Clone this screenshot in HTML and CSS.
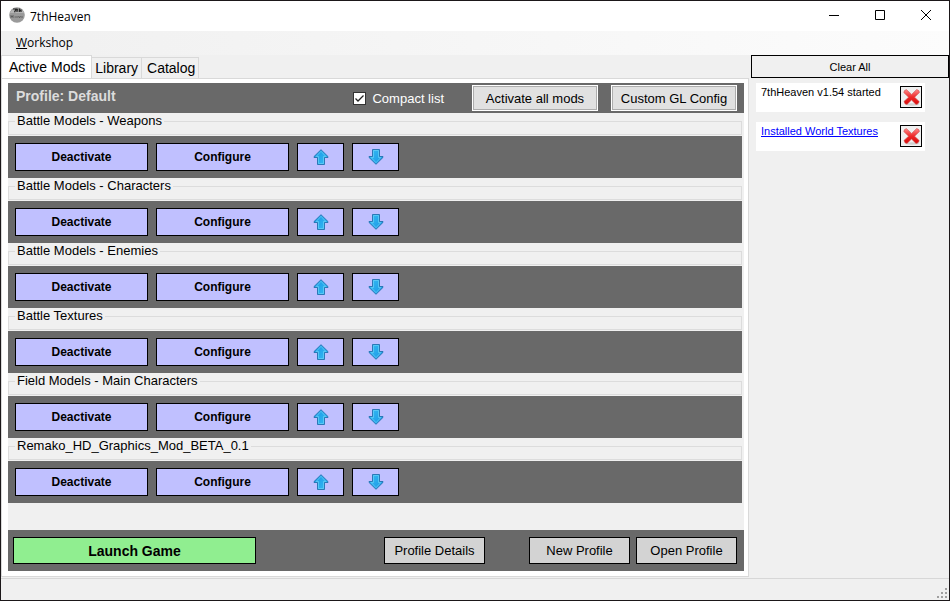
FILE: index.html
```html
<!DOCTYPE html>
<html lang="en">

<head>
    <meta charset="UTF-8">
    <meta name="viewport" content="width=device-width, initial-scale=1.0">
    <title>7thHeaven</title>
    <link rel="stylesheet" href="styles.css">
</head>

<body>

<!-- shared icons -->
<svg class="defs" width="0" height="0" aria-hidden="true">
    <defs>
        <linearGradient id="blue" x1="0" y1="0" x2="1" y2="1">
            <stop offset="0" stop-color="#1a96e4" />
            <stop offset="1" stop-color="#35bcf4" />
        </linearGradient>
        <linearGradient id="red" x1="0" y1="0" x2="0" y2="1">
            <stop offset="0" stop-color="#ff8a8a" />
            <stop offset="0.5" stop-color="#ee2a2a" />
            <stop offset="1" stop-color="#d80808" />
        </linearGradient>
        <symbol id="arrow" viewBox="0 0 16 16">
            <path d="M8 .7 L15 7.6 V8.5 H11.5 V15.5 H4.5 V8.5 H1 V7.6 Z" fill="url(#blue)" stroke="#2272b0" stroke-width=".9" />
            <path d="M8 2.3 L12.8 7.5 H10.5 V14.5 H5.5 V7.5 H3.2 Z" fill="none" stroke="#6ad2f6" stroke-width=".7" />
        </symbol>
        <symbol id="cross" viewBox="0 0 20 20">
            <ellipse cx="11" cy="17.5" rx="7" ry="1.2" fill="#cfcfcf" />
            <path d="M5.4 2.6 L10.6 7.4 L15.6 2.6 Q18.4 3 18.4 5.6 L13.6 10.2 L18.2 14.6 Q17.6 17.4 15 17.4 L10.5 13 L6 17.4 Q3.2 17 3 14.4 L7.6 10.2 L2.8 5.6 Q3 3 5.4 2.6 Z" fill="url(#red)" stroke="#cf5050" stroke-width=".6" stroke-linejoin="round" />
        </symbol>
    </defs>
</svg>

<div class="window">
    <header class="titlebar">
        <svg class="logo" width="16" height="16" viewBox="0 0 16 16">
            <circle cx="8" cy="8" r="7.8" fill="#9a9a9a" />
            <path d="M1 6 A7.5 7.5 0 0 1 15 6 Z" fill="#b4b4b4" />
            <path d="M4 2 H7 L5.5 5.2 M8 1.5 V5 M7.2 2.8 H9 M10.3 1.5 V5 M10.3 3.2 H12 V5" fill="none" stroke="#222" stroke-width="1.2" />
            <path d="M2 8 V11 M2 9.5 H4 M4 8 V11 M5.5 10 H7 M8 9 V11 M9.5 9 L10.5 11 L11.5 9 M13 9 V11" fill="none" stroke="#555" stroke-width=".8" />
        </svg>
        <span class="title">7thHeaven</span>
        <button class="win-btn" aria-label="Minimize"><svg width="12" height="12"><path d="M1 5.5 H11" stroke="#000" /></svg></button>
        <button class="win-btn" aria-label="Maximize"><svg width="12" height="12"><path d="M1.5 .5 H10.5 V9.5 H1.5 Z" fill="none" stroke="#000" /></svg></button>
        <button class="win-btn" aria-label="Close"><svg width="12" height="12"><path d="M1 0 L11 10 M11 0 L1 10" stroke="#000" /></svg></button>
    </header>

    <nav class="menu">
        <button><u>W</u>orkshop</button>
    </nav>

    <div class="content">
        <main>
            <div class="tabs">
                <button class="tab active">Active Mods</button>
                <button class="tab">Library</button>
                <button class="tab">Catalog</button>
            </div>
            <div class="panel">
                <div class="profile-bar">
                    <h1>Profile: Default</h1>
                    <label class="compact"><input type="checkbox" checked>Compact list</label>
                    <button class="btn-std">Activate all mods</button>
                    <button class="btn-std">Custom GL Config</button>
                </div>
                <div id="mods"></div>
                <div class="footer-bar">
                    <button class="btn-launch">Launch Game</button>
                    <button class="btn-flat details">Profile Details</button>
                    <button class="btn-flat new">New Profile</button>
                    <button class="btn-flat">Open Profile</button>
                </div>
            </div>
        </main>

        <aside>
            <button class="clear">Clear All</button>
            <div class="message">
                <span>7thHeaven v1.54 started</span>
                <button aria-label="Dismiss"><svg width="20" height="20"><use href="#cross" /></svg></button>
            </div>
            <div class="message">
                <a href="#">Installed World Textures</a>
                <button aria-label="Dismiss"><svg width="20" height="20"><use href="#cross" /></svg></button>
            </div>
        </aside>
    </div>

    <footer class="statusbar">
        <svg width="12" height="12" fill="#a0a0a0">
            <path d="M9 1h2v2h-2z M5 5h2v2h-2z M9 5h2v2h-2z M1 9h2v2h-2z M5 9h2v2h-2z M9 9h2v2h-2z" />
        </svg>
    </footer>
</div>

<script>
    var mods = [
        'Battle Models - Weapons',
        'Battle Models - Characters',
        'Battle Models - Enemies',
        'Battle Textures',
        'Field Models - Main Characters',
        'Remako_HD_Graphics_Mod_BETA_0.1'
    ];

    var output = '';
    for (var i = 0; i < mods.length; i++) {
        output +=
            '<section class="mod">' +
            '<fieldset><legend>' + mods[i] + '</legend></fieldset>' +
            '<div class="mod-bar">' +
            '<button class="btn-mod">Deactivate</button>' +
            '<button class="btn-mod">Configure</button>' +
            '<button class="btn-mod arrow" aria-label="Move up"><svg width="16" height="16"><use href="#arrow" /></svg></button>' +
            '<button class="btn-mod arrow down" aria-label="Move down"><svg width="16" height="16"><use href="#arrow" /></svg></button>' +
            '</div>' +
            '</section>';
    }
    document.getElementById('mods').innerHTML = output;
</script>
</body>

</html>
```
FILE: styles.css
```css
* {
    box-sizing: border-box;
}

body {
    margin: 0;
    font-family: "Liberation Sans", Arial, sans-serif;
    font-size: 13px;
    color: #000;
}

button {
    font: inherit;
    color: inherit;
    padding: 0;
    border: 0;
    background: none;
}

.defs {
    position: absolute;
}

.window {
    display: flex;
    flex-direction: column;
    min-height: 100vh;
    border: 1px solid #1b1719;
    background: #f0f0f0;
}

/* title bar */
.titlebar {
    display: flex;
    align-items: center;
    height: 30px;
    padding-left: 8px;
    background: #fff;
    font-family: "Open Sans", "Segoe UI", sans-serif;
    font-size: 12px;
}

.logo {
    margin-bottom: 2px;
}

.title {
    flex: 1;
    margin-left: 5px;
}

.win-btn {
    display: flex;
    align-items: center;
    justify-content: center;
    width: 46px;
    height: 28px;
}

.menu {
    height: 24px;
    padding: 3px 15px;
    background: linear-gradient(to right, #f0f0f0, #fcfcfc);
    font-family: "Open Sans", "Segoe UI", sans-serif;
    font-size: 12px;
    line-height: 18px;
}

.content {
    display: flex;
    flex: 1;
    gap: 2px;
}

main {
    display: flex;
    flex-direction: column;
    flex: 1;
}

/* tabs */
.tabs {
    display: flex;
    align-items: flex-end;
    height: 24px;
    margin-bottom: -1px;
    font-size: 14px;
}

.tab {
    height: 22px;
    padding: 0 3px;
    border: 1px solid #d9d9d9;
    border-left: 0;
}

.tab:last-child {
    padding-left: 5px;
}

.tab.active {
    height: 24px;
    padding: 0 6px 2px 7px;
    border: 1px solid #d9d9d9;
    border-bottom: 0;
    background: #fff;
}

.panel {
    display: flex;
    flex-direction: column;
    flex: 1;
    padding: 4px 4px 5px 6px;
    border: 1px solid #d9d9d9;
    background: #fff;
}

.profile-bar {
    display: flex;
    align-items: center;
    height: 30px;
    padding: 0 7px 0 8px;
    background: #696969;
}

.profile-bar h1 {
    flex: 1;
    margin: 0 0 4px;
    font-size: 14px;
    color: #dcdcdc;
}

.compact {
    display: flex;
    align-items: center;
    margin-right: 28px;
    color: #fff;
}

.compact input {
    appearance: none;
    width: 13px;
    height: 13px;
    margin: 0 6px 0 0;
    border: 1px solid #333;
    background: #fff;
}

.compact input:checked {
    background: #fff url("data:image/svg+xml,%3Csvg xmlns='http://www.w3.org/2000/svg' viewBox='0 0 11 11'%3E%3Cpath d='M1.5 5.5 L4 8 L9.5 2.5' fill='none' stroke='%23222' stroke-width='1.3'/%3E%3C/svg%3E");
}

.btn-std {
    width: 126px;
    height: 26px;
    border: 1px solid #fff;
    box-shadow: inset 0 0 0 1px #adadad;
    background: #e1e1e1;
}

.btn-std + .btn-std {
    margin-left: 13px;
}

/* mod list */
#mods {
    flex: 1;
    padding-right: 2px;
    background: #f0f0f0;
}

.mod fieldset {
    height: 22px;
    margin: 0 0 1px;
    padding: 0 6px;
    border: 1px solid #dcdcdc;
}

.mod legend {
    padding: 0 2px;
    line-height: 16px;
}

.mod-bar {
    display: flex;
    gap: 8px;
    padding: 7px;
    background: #696969;
}

.btn-mod {
    width: 133px;
    height: 28px;
    border: 1px solid #000;
    background: #c0c0ff;
    font-size: 12px;
    font-weight: bold;
}

.btn-mod.arrow {
    display: flex;
    align-items: center;
    justify-content: center;
    width: 47px;
}

.btn-mod.down svg {
    transform: rotate(180deg);
}

.footer-bar {
    display: flex;
    align-items: center;
    height: 41px;
    padding: 0 7px 0 5px;
    background: #696969;
}

.btn-launch {
    width: 243px;
    height: 27px;
    border: 1px solid #000;
    background: #90ee90;
    font-size: 14px;
    font-weight: bold;
}

.btn-flat {
    width: 101px;
    height: 27px;
    border: 1px solid #000;
    background: #d3d3d3;
}

.details {
    margin-left: auto;
    margin-right: 44px;
}

.new {
    margin-right: 6px;
}

/* messages */
aside {
    width: 198px;
    font-size: 11px;
}

.clear {
    width: 100%;
    height: 23px;
    border: 1px solid #000;
}

.message {
    display: flex;
    justify-content: space-between;
    width: 169px;
    height: 29px;
    margin: 5px 0 10px 5px;
    padding: 3px 3px 3px 5px;
    background: #fff;
}

.message a {
    color: #0000ff;
}

.message button {
    width: 22px;
    height: 22px;
    border: 1px solid #000;
    background: #f0f0f0;
}

.message svg {
    display: block;
}

.statusbar {
    display: flex;
    align-items: flex-end;
    justify-content: flex-end;
    height: 22px;
    margin-top: 1px;
    padding: 1px;
    border-top: 1px solid #d7d7d7;
}
```
